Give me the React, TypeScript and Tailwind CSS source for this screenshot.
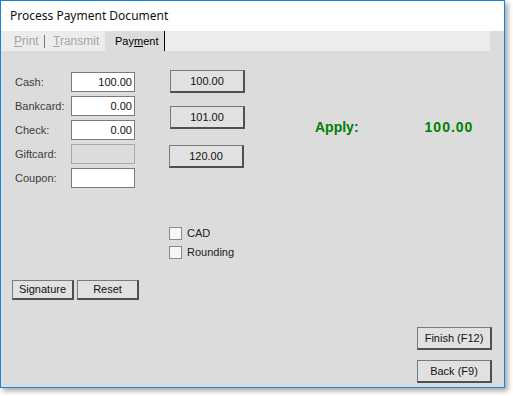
import React from "react";

const F = { fontFamily: '"Liberation Sans", Arial, sans-serif' };

function Btn({ children, w = "w-[75px]", h = "h-[23px]", className = "" }: { children: React.ReactNode; w?: string; h?: string; className?: string }) {
  return (
    <div
      className={`${w} ${h} ${className} flex items-center justify-center bg-[#e1e1e1] border border-[#7a7a7a] border-r-[#505050] border-b-[#505050] border-r-2 border-b-2 text-[11px] text-[#111]`}
    >
      {children}
    </div>
  );
}

function Field({ label, value, disabled }: { label: string; value?: string; disabled?: boolean }) {
  return (
    <div className="flex items-center h-[20px]">
      <div className="w-[56px] text-[11px] text-[#3c3c3c]">{label}</div>
      <div
        className={`w-[64px] h-[20px] border flex items-center justify-end pr-[2px] text-[11px] text-[#111] ${
          disabled ? "bg-[#dcdcdc] border-[#a8a8a8]" : "bg-white border-[#7a7a7a]"
        }`}
      >
        {value}
      </div>
    </div>
  );
}

function Check({ label }: { label: string }) {
  return (
    <div className="flex items-center h-[19px]">
      <div className="w-[13px] h-[13px] border border-[#8a8a8a] bg-[#f6f6f6]" />
      <span className="ml-[5px] text-[11px] text-[#222]">{label}</span>
    </div>
  );
}

export default function App() {
  return (
    <div className="w-[513px] h-[396px] bg-white" style={F}>
      <div className="w-[505px] h-[388px] border border-[#1883d7] bg-[#dcdcdc] flex flex-col shadow-[3px_3px_5px_rgba(0,0,0,0.35)]">
        {/* Title bar */}
        <div className="h-[30px] bg-white flex items-center pl-[9px] text-[12px] text-[#111]" style={{ fontFamily: '"Noto Sans", "Open Sans", sans-serif' }}>
          Process Payment Document
        </div>
        {/* Tab strip */}
        <div className="h-[20px] w-[489px] bg-[#ececec] flex items-center text-[12px]">
          <span className="ml-[13px] w-[24px] text-[#a6a6a6]">
            <span className="underline">P</span>rint
          </span>
          <div className="ml-[6px] w-px h-[13px] bg-[#777]" />
          <span className="ml-[8px] w-[46px] text-[#a6a6a6]">
            <span className="underline">T</span>ransmit
          </span>
          <div className="ml-[6px] h-[20px] w-[60px] bg-[#dcdcdc] border-r border-black flex items-center pl-[10px] text-[11px] text-black">
            Pay<span className="underline">m</span>ent
          </div>
        </div>
        {/* Body */}
        <div className="flex-1 flex flex-col">
          <div className="flex">
            <div className="ml-[14px] mt-[21px] flex flex-col gap-[4px]">
              <Field label="Cash:" value="100.00" />
              <Field label="Bankcard:" value="0.00" />
              <Field label="Check:" value="0.00" />
              <Field label="Giftcard:" disabled />
              <Field label="Coupon:" />
            </div>
            <div className="ml-[35px] mt-[19px] flex flex-col">
              <Btn>100.00</Btn>
              <Btn className="mt-[13px]">101.00</Btn>
              <Btn className="mt-[16px] -ml-px">120.00</Btn>
            </div>
            <div className="ml-[70px] mt-[67px] flex h-[18px] items-center text-[14px] font-bold text-[#008000]">
              <span>Apply:</span>
              <span className="ml-[66px] tracking-[1px]">100.00</span>
            </div>
          </div>
          <div className="ml-[168px] mt-[36px] flex flex-col">
            <Check label="CAD" />
            <Check label="Rounding" />
          </div>
          <div className="ml-[11px] mt-[18px] flex gap-[3px]">
            <Btn w="w-[62px]" h="h-[20px]">Signature</Btn>
            <Btn w="w-[62px]" h="h-[20px]">Reset</Btn>
          </div>
          <div className="mt-[27px] mr-[12px] flex flex-col items-end gap-[10px]">
            <Btn>Finish (F12)</Btn>
            <Btn>Back (F9)</Btn>
          </div>
        </div>
      </div>
    </div>
  );
}
